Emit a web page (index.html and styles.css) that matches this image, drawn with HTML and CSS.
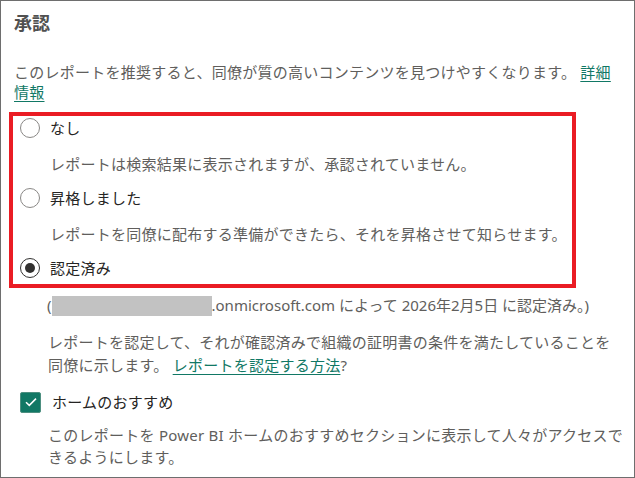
FILE: index.html
```html
<!DOCTYPE html>
<html lang="ja">
<head>
    <meta charset="UTF-8">
    <title>承認</title>
    <link rel="stylesheet" href="styles.css">
</head>
<body>
    <!-- 承認パネル -->
    <div class="panel">
        <h2 class="section-title">承認</h2>
        <p class="section-desc">このレポートを推奨すると、同僚が質の高いコンテンツを見つけやすくなります。 <a href="#" class="link">詳細<br>情報</a></p>

        <!-- 選択肢 (赤枠) -->
        <div class="highlight">
            <div class="option">
                <span class="radio"></span>
                <span class="option-label">なし</span>
            </div>
            <p class="option-desc">レポートは検索結果に表示されますが、承認されていません。</p>

            <div class="option">
                <span class="radio"></span>
                <span class="option-label">昇格しました</span>
            </div>
            <p class="option-desc">レポートを同僚に配布する準備ができたら、それを昇格させて知らせます。</p>

            <div class="option">
                <span class="radio checked"></span>
                <span class="option-label">認定済み</span>
            </div>
        </div>

        <p class="endorsed-by">(<span class="redacted"></span>.onmicrosoft.com によって 2026年2月5日 に認定済み。)</p>

        <p class="note">レポートを認定して、それが確認済みで組織の証明書の条件を満たしていることを<br>同僚に示します。 <a href="#" class="link">レポートを認定する方法</a>?</p>

        <div class="check-row">
            <span class="checkbox">
                <svg width="12" height="10" viewBox="0 0 12 10">
                    <polyline points="1,5.2 4.3,8.4 11,1.6" fill="none" stroke="#fff" stroke-width="1.5"/>
                </svg>
            </span>
            <span class="option-label">ホームのおすすめ</span>
        </div>
        <p class="note home-note">このレポートを Power BI ホームのおすすめセクションに表示して人々がアクセスで<br>きるようにします。</p>
    </div>
</body>
</html>
```

FILE: styles.css
```css
/* 全体 */
body {
    margin: 0;
    font-family: "Noto Sans", "Noto Sans CJK JP", sans-serif;
    font-size: 15px;
    letter-spacing: 0.25px;
    color: #605e5c;
    background: #fff;
}

.panel {
    height: 478px;
    box-sizing: border-box;
    border: 1px solid #6e6e6e;
    padding: 10px 1px 0 13px;
    overflow: hidden;
}

p {
    margin: 0;
}

.section-title {
    margin: 0;
    font-size: 18px;
    line-height: 24px;
    font-weight: 600;
    letter-spacing: 0;
    color: #505050;
}

.section-desc {
    margin-top: 27px;
    line-height: 20px;
}

.link {
    color: #117865;
    text-decoration: underline;
    text-underline-offset: 3px;
}

/* 赤枠 */
.highlight {
    width: 567px;
    box-sizing: border-box;
    margin: 10px 0 0 -5px;
    border: 4px solid #ea1c24;
    padding: 0 0 4px 7px;
}

.option {
    display: flex;
    align-items: center;
    gap: 10px;
    height: 24px;
}

.option-label {
    color: #252423;
    line-height: 24px;
}

.radio {
    width: 20px;
    height: 20px;
    box-sizing: border-box;
    border: 1px solid #8a8886;
    border-radius: 50%;
    display: flex;
    align-items: center;
    justify-content: center;
}

.radio.checked {
    border-color: #323130;
}

.radio.checked::after {
    content: '';
    width: 10px;
    height: 10px;
    border-radius: 50%;
    background: #323130;
}

.option-desc {
    margin: 14px 0 12px 30px;
    line-height: 20px;
}

/* 認定情報 */
.endorsed-by {
    margin: 7px 0 0 33px;
    line-height: 20px;
    letter-spacing: 0;
}

.redacted {
    display: inline-block;
    width: 160px;
    height: 20px;
    background: #c2c2c2;
    vertical-align: -5px;
}

.note {
    margin: 15px 0 0 34px;
    line-height: 23px;
}

.check-row {
    display: flex;
    align-items: center;
    gap: 11px;
    height: 24px;
    margin: 13px 0 0 6px;
}

.checkbox {
    width: 21px;
    height: 21px;
    box-sizing: border-box;
    border-radius: 2px;
    background: #117865;
    border: 1px solid #4d8f80;
    display: flex;
    align-items: center;
    justify-content: center;
}

.home-note {
    margin-top: 10px;
    line-height: 22px;
}
```
